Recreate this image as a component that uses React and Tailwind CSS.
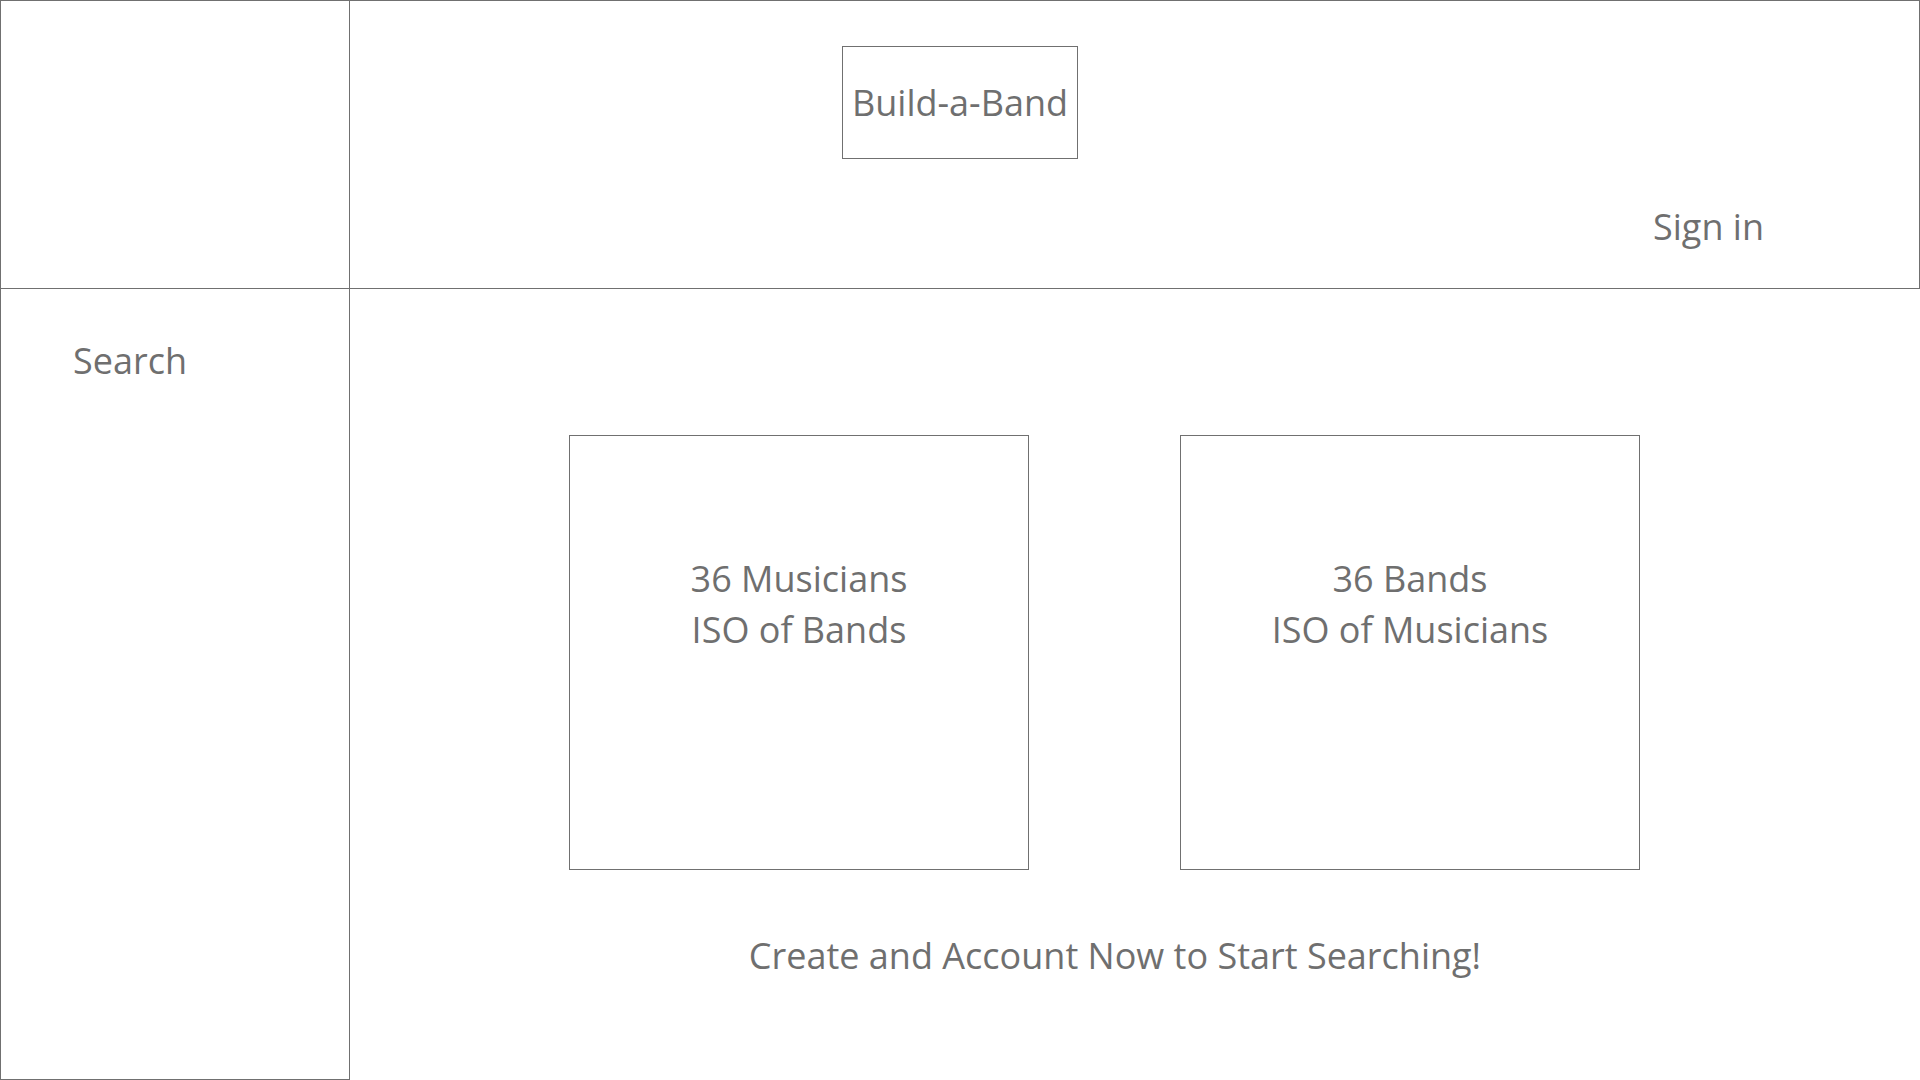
import React from 'react';

const font = { fontFamily: '"Open Sans", "Noto Sans", sans-serif' };

function StatCard({ lines }) {
  return (
    <div className="w-[460px] h-[435px] border border-[#707070] pt-[117px] text-center text-[36px] leading-[51px] text-[#6f6f6f]">
      {lines.map((line) => (
        <div key={line}>{line}</div>
      ))}
    </div>
  );
}

function App() {
  return (
    <div className="w-[1920px] h-[1080px] bg-white grid grid-cols-[350px_1570px] grid-rows-[289px_791px] text-[#6f6f6f] overflow-hidden" style={font}>
      {/* corner */}
      <div className="border border-[#707070]" />

      {/* header */}
      <header className="border-t border-r border-b border-[#707070] flex flex-col pt-[45px]">
        <div className="ml-[492px] w-[236px] h-[113px] border border-[#707070] flex items-center justify-center text-[36px]">
          Build-a-Band
        </div>
        <div className="ml-[1303px] mt-[43px] text-[36px] leading-[50px]">Sign in</div>
      </header>

      {/* sidebar */}
      <aside className="border-l border-r border-b border-[#707070] pt-[47px] pl-[72px]">
        <div className="text-[36px] leading-[50px]">Search</div>
      </aside>

      {/* main */}
      <main className="flex flex-col pt-[146px]">
        <div className="flex gap-[151px] pl-[219px]">
          <StatCard lines={['36 Musicians', 'ISO of Bands']} />
          <StatCard lines={['36 Bands', 'ISO of Musicians']} />
        </div>
        <div className="w-[1530px] mt-[61px] text-center text-[36px] leading-[50px]">
          Create and Account Now to Start Searching!
        </div>
      </main>
    </div>
  );
}

export default App;
